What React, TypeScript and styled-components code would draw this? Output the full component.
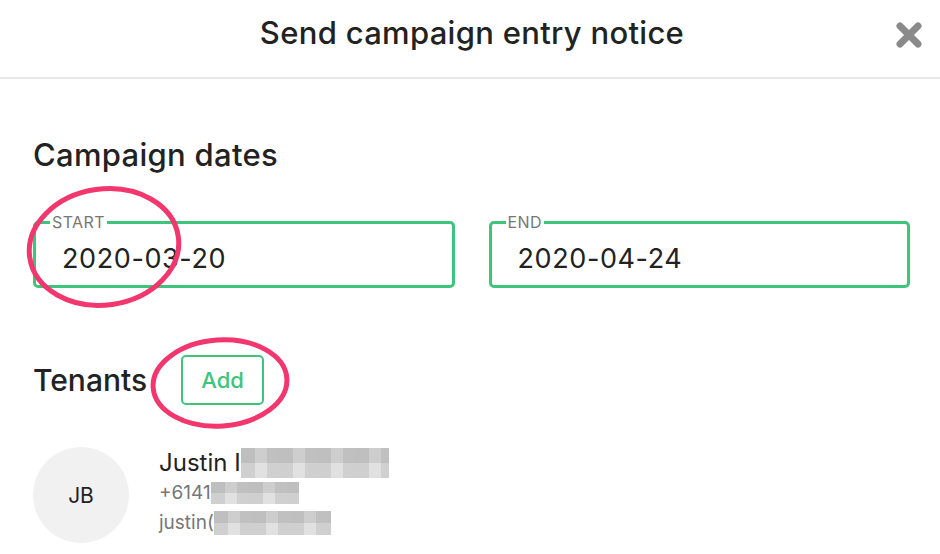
import React from 'react';
import styled, { createGlobalStyle } from 'styled-components';

const GlobalStyle = createGlobalStyle`
	html, body {
		margin: 0;
		padding: 0;
		background: #fff;
	}
	body {
		font-family: 'Inter', 'Noto Sans', sans-serif;
		color: #222;
	}
`;

const SModal = styled.div`
	position: relative;
	width: 940px;
	height: 554px;
	overflow: hidden;
	background: #fff;
`;

const SHeader = styled.div`
	height: 77px;
	border-bottom: 2px solid #e8e8e8;
	display: flex;
	justify-content: center;
	position: relative;
`;

const STitle = styled.div`
	font-size: 31px;
	font-weight: 500;
	line-height: 36px;
	letter-spacing: 0.3px;
	padding-top: 15px;
	color: #222;
	margin-left: 4px;
`;

const SClose = styled.button`
	position: absolute;
	right: 16px;
	top: 20px;
	width: 30px;
	height: 30px;
	border: none;
	background: none;
	padding: 0;
	cursor: pointer;
`;

const SBody = styled.div`
	padding: 0 30px 0 33px;
`;

const SSectionTitle = styled.h2<{ $size?: number }>`
	margin: 0;
	font-size: ${p => p.$size ?? 30}px;
	font-weight: 500;
	color: #222;
	line-height: 36px;
`;

const SDatesTitle = styled(SSectionTitle)`
	padding-top: 58px;
	letter-spacing: 0.3px;
`;

const SFieldRow = styled.div`
	display: grid;
	grid-template-columns: 1fr 1fr;
	gap: 34px;
	margin-top: 40px;
`;

const SField = styled.fieldset`
	margin: 0;
	border: 3px solid #3fc47c;
	border-radius: 5px;
	padding: 0 0 0 26px;
	height: 75px;
	box-sizing: border-box;
	display: flex;
	align-items: center;
`;

const SLegend = styled.legend`
	margin-left: -12px;
	padding: 0 2px;
	font-size: 16px;
	line-height: 19px;
	letter-spacing: 0.4px;
	color: #777;
`;

const SValue = styled.div`
	font-size: 27px;
	letter-spacing: 0.6px;
	color: #222;
	margin-top: 0;
`;

const STenantsRow = styled.div`
	display: flex;
	align-items: center;
	gap: 34px;
	margin-top: 67px;
`;

const SAddButton = styled.button`
	height: 50px;
	width: 83px;
	border: 2px solid #3fc47c;
	border-radius: 5px;
	background: #fff;
	color: #3fc47c;
	font-family: inherit;
	font-size: 22px;
	font-weight: 500;
	cursor: pointer;
`;

const STenant = styled.div`
	display: flex;
	align-items: center;
	gap: 32px;
	margin-top: 42px;
`;

const SAvatar = styled.div`
	width: 96px;
	height: 96px;
	border-radius: 50%;
	background: #f1f1f1;
	display: flex;
	align-items: center;
	justify-content: center;
	font-size: 21px;
	color: #222;
	flex-shrink: 0;
`;

const SInfo = styled.div`
	display: flex;
	flex-direction: column;
	margin-top: -4px;
	margin-left: -2px;
`;

const SLine = styled.div<{ $size: number; $muted?: boolean }>`
	display: flex;
	align-items: center;
	font-size: ${p => p.$size}px;
	color: ${p => (p.$muted ? '#777' : '#222')};
	line-height: 30px;
	white-space: nowrap;
`;

const SBlur = styled.span<{ $w: number; $h: number }>`
	display: inline-block;
	width: ${p => p.$w}px;
	height: ${p => p.$h}px;
	background:
		repeating-linear-gradient(90deg, rgba(160,160,160,0.35) 0 14px, rgba(200,200,200,0.25) 14px 26px, rgba(170,170,170,0.4) 26px 38px),
		linear-gradient(180deg, #cfcfcf 0 50%, #e9e9e9 50% 100%);
`;

const SMarks = styled.svg`
	position: absolute;
	left: 0;
	top: 0;
	pointer-events: none;
`;

const CloseIcon = () => (
	<svg width="30" height="30" viewBox="0 0 30 30">
		<path d="M6 6 L24 24 M24 6 L6 24" stroke="#8a8a8a" strokeWidth="7" strokeLinecap="round" />
	</svg>
);

const App: React.FC = () => {
	return (
		<>
			<GlobalStyle />
			<SModal>
				<SHeader>
					<STitle>Send campaign entry notice</STitle>
					<SClose aria-label="Close">
						<CloseIcon />
					</SClose>
				</SHeader>
				<SBody>
					<SDatesTitle $size={31}>Campaign dates</SDatesTitle>
					<SFieldRow>
						<SField>
							<SLegend>START</SLegend>
							<SValue>2020-03-20</SValue>
						</SField>
						<SField>
							<SLegend>END</SLegend>
							<SValue>2020-04-24</SValue>
						</SField>
					</SFieldRow>
					<STenantsRow>
						<SSectionTitle>Tenants</SSectionTitle>
						<SAddButton>Add</SAddButton>
					</STenantsRow>
					<STenant>
						<SAvatar>JB</SAvatar>
						<SInfo>
							<SLine $size={24}>
								Justin I<SBlur $w={148} $h={30} />
							</SLine>
							<SLine $size={19} $muted>
								+6141<SBlur $w={88} $h={22} />
							</SLine>
							<SLine $size={19} $muted>
								justin(<SBlur $w={117} $h={24} />
							</SLine>
						</SInfo>
					</STenant>
				</SBody>
				<SMarks width="940" height="554">
					<ellipse cx="104" cy="247" rx="75" ry="58" fill="none" stroke="#f2366e" strokeWidth="5" transform="rotate(-8 104 247)" />
					<ellipse cx="220" cy="383" rx="67" ry="43" fill="none" stroke="#f2366e" strokeWidth="5" transform="rotate(-4 220 383)" />
				</SMarks>
			</SModal>
		</>
	);
};

export default App;
